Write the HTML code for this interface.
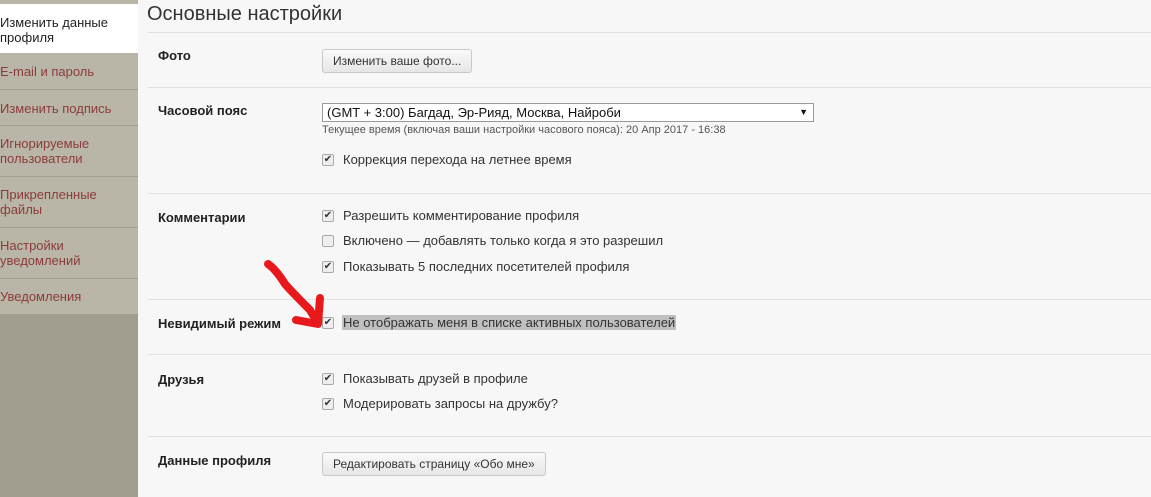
<html><head><style>
body{margin:0;width:1151px;height:497px;background:#f7f7f7;font-family:"Liberation Sans",sans-serif;position:relative;overflow:hidden}
.sb{position:absolute;left:0;top:0;width:138px;height:497px;background:#a19d8f}
.it{position:absolute;left:0;width:138px;background:#bab6a7;color:#8b3b3b;font-size:13px;line-height:15px;border-bottom:1px solid #a39f90;box-sizing:border-box;padding-left:0}
.t{position:absolute;font-size:13px;color:#333;white-space:nowrap}
.lb{position:absolute;left:158px;font-size:13px;font-weight:bold;color:#222}
.hr{position:absolute;left:148px;width:1003px;height:1px;background:#e2e2e2}
.cb{position:absolute;left:322px;width:10px;height:10px;border:1px solid #aaa;border-radius:2px;background:#eee;font-size:10px;line-height:10px;text-align:center;color:#333}
.btn{position:absolute;left:322px;height:22px;border:1px solid #c8c8c8;border-radius:3px;background:linear-gradient(#fafafa,#e6e6e6);font-size:12px;color:#333;line-height:22px;padding:0 10px}
</style></head><body>
<div class="sb">
<div class="it" style="top:0;height:4px;background:#bab6a7;border:none"></div>
<div class="it" style="top:4px;height:49px;background:#fff;color:#222;padding-top:11px;border:none">Изменить данные<br>профиля</div>
<div class="it" style="top:53px;height:37px;padding-top:11px">E-mail и пароль</div>
<div class="it" style="top:90px;height:36px;padding-top:11px">Изменить подпись</div>
<div class="it" style="top:126px;height:51px;padding-top:10px">Игнорируемые<br>пользователи</div>
<div class="it" style="top:177px;height:51px;padding-top:10px">Прикрепленные<br>файлы</div>
<div class="it" style="top:228px;height:51px;padding-top:10px">Настройки<br>уведомлений</div>
<div class="it" style="top:279px;height:35px;padding-top:10px;border:none">Уведомления</div>
</div>
<div class="t" style="left:147px;top:3px;font-size:20px;color:#333">Основные настройки</div>
<div class="hr" style="top:32px"></div>
<div class="lb" style="top:48px">Фото</div>
<div class="btn" style="top:49px">Изменить ваше фото...</div>
<div class="hr" style="top:87px"></div>
<div class="lb" style="top:103px">Часовой пояс</div>
<div style="position:absolute;left:322px;top:103px;width:486px;height:17px;border:1px solid #999;background:#fff;font-size:13px;line-height:17px;padding-left:4px;color:#111">(GMT + 3:00) Багдад, Эр-Рияд, Москва, Найроби<span style="position:absolute;right:5px;font-size:9px">▼</span></div>
<div class="t" style="left:322px;top:124px;font-size:11px;color:#555">Текущее время (включая ваши настройки часового пояса): 20 Апр 2017 - 16:38</div>
<div class="cb" style="top:154px">✔</div><div class="t" style="left:343px;top:152px">Коррекция перехода на летнее время</div>
<div class="hr" style="top:193px"></div>
<div class="lb" style="top:210px">Комментарии</div>
<div class="cb" style="top:210px">✔</div><div class="t" style="left:343px;top:208px">Разрешить комментирование профиля</div>
<div class="cb" style="top:235px"></div><div class="t" style="left:343px;top:233px">Включено — добавлять только когда я это разрешил</div>
<div class="cb" style="top:261px">✔</div><div class="t" style="left:343px;top:259px">Показывать 5 последних посетителей профиля</div>
<div class="hr" style="top:299px"></div>
<div class="lb" style="top:316px">Невидимый режим</div>
<div class="cb" style="top:317px">✔</div><div class="t" style="left:342px;top:315px;background:#c0c0c0;padding:0 1px">Не отображать меня в списке активных пользователей</div>
<svg style="position:absolute;left:260px;top:258px" width="70" height="75"><path d="M8 6 C14 10 20 18 25 26 C32 34 40 42 50 52 C52 56 55 60 58 64 M60 40 L58 66 L36 62" stroke="#e8191c" stroke-width="8" fill="none" stroke-linecap="round" stroke-linejoin="round"/></svg>
<div class="hr" style="top:354px"></div>
<div class="lb" style="top:372px">Друзья</div>
<div class="cb" style="top:373px">✔</div><div class="t" style="left:343px;top:371px">Показывать друзей в профиле</div>
<div class="cb" style="top:398px">✔</div><div class="t" style="left:343px;top:396px">Модерировать запросы на дружбу?</div>
<div class="hr" style="top:436px"></div>
<div class="lb" style="top:453px">Данные профиля</div>
<div class="btn" style="top:452px">Редактировать страницу «Обо мне»</div>
</body></html>
